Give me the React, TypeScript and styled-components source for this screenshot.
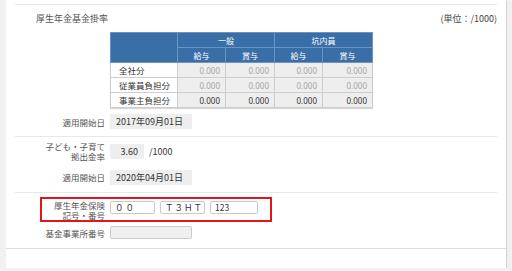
import React from 'react'
import styled, { createGlobalStyle } from 'styled-components'

const GlobalStyle = createGlobalStyle`
  html, body {
    margin: 0;
    padding: 0;
    background: #f1f1f1;
  }
  body {
    font-family: "Noto Sans CJK JP", "Noto Sans", sans-serif;
    color: #555;
  }
`

const Panel = styled.div`
  margin: 0 6px;
  width: 500px;
  height: 268px;
  background: #fff;
  box-shadow: 1px 1px 1px #d6d6d6;
  display: flex;
  flex-direction: column;
`

const Content = styled.div`
  padding: 0 9px;
  flex: 1;
`

const Divider = styled.div<{ $top?: number; $bottom?: number }>`
  height: 1px;
  background: #e8e8e8;
  margin-top: ${p => p.$top ?? 0}px;
  margin-bottom: ${p => p.$bottom ?? 0}px;
`

const TitleRow = styled.div`
  height: 26px;
  display: flex;
  align-items: center;
  justify-content: space-between;
  padding-left: 21px;
  font-size: 9px;
  color: #555;
  margin-bottom: 1px;
`

const Unit = styled.span`
  font-size: 9px;
  color: #444;
`

const RateTable = styled.table`
  margin-left: 95px;
  border-collapse: collapse;
  table-layout: fixed;
  width: 262px;
  font-size: 8px;
  border: 1px solid #c6c6c6;
  box-shadow: 0 1px 1px #d8d8d8;
`

const HeadCell = styled.th`
  background: #3a6ea7;
  color: #fff;
  font-weight: normal;
  height: 14px;
  padding: 0;
  border: 1px solid #6a94c2;
  text-align: center;
`

const LabelCell = styled.td`
  background: #fff;
  color: #333;
  height: 14px;
  padding: 0 0 0 8px;
  border: 1px solid #cdcdcd;
  font-size: 8.5px;
  white-space: nowrap;
`

const ValueCell = styled.td<{ $strong?: boolean }>`
  background: #eeeeee;
  color: ${p => (p.$strong ? '#333' : '#a5a5a5')};
  height: 14px;
  padding: 0 5px 0 0;
  border: 1px solid #cdcdcd;
  text-align: right;
  font-family: "Noto Sans", sans-serif;
`

const FieldRow = styled.div<{ $top: number; $height: number }>`
  display: flex;
  align-items: center;
  gap: 5px;
  margin-top: ${p => p.$top}px;
  height: ${p => p.$height}px;
`

const Label = styled.div<{ $width?: number }>`
  width: ${p => p.$width ?? 90}px;
  text-align: right;
  font-size: 8.5px;
  line-height: 10px;
  color: #555;
  flex-shrink: 0;
`

const ReadBox = styled.div<{ $width: number; $align?: string }>`
  width: ${p => p.$width}px;
  height: 15px;
  box-sizing: border-box;
  background: #eeeeee;
  color: #333;
  font-size: 9px;
  line-height: 15px;
  padding: 0 6px;
  text-align: ${p => p.$align ?? 'left'};
`

const Suffix = styled.span`
  font-size: 9px;
  color: #333;
`

const Highlight = styled.div`
  margin-top: 4px;
  margin-left: 25px;
  width: 232px;
  height: 25px;
  box-sizing: border-box;
  border: 2px solid #e3141c;
  display: flex;
  align-items: flex-start;
  gap: 5px;
`

const HighlightLabel = styled(Label)`
  width: 63px;
  margin-top: 1px;
`

const TextInput = styled.div<{ $width: number; $center?: boolean }>`
  margin-top: 2px;
  width: ${p => p.$width}px;
  height: 13px;
  box-sizing: border-box;
  border: 1px solid #c9c9c9;
  border-radius: 2px;
  background: #fff;
  color: #333;
  font-size: 8.5px;
  line-height: 11px;
  padding: 0 4px;
  letter-spacing: ${p => (p.$center ? '1px' : '0')};
  text-align: ${p => (p.$center ? 'center' : 'left')};
  white-space: nowrap;
`

const DisabledInput = styled.div`
  width: 82px;
  height: 13px;
  box-sizing: border-box;
  border: 1px solid #cccccc;
  border-radius: 2px;
  background: #efefef;
`

const Footer = styled.div`
  border-top: 1px solid #dedede;
  height: 19px;
`

const rows = [
  { name: '全社分', values: ['0.000', '0.000', '0.000', '0.000'], strong: false },
  { name: '従業員負担分', values: ['0.000', '0.000', '0.000', '0.000'], strong: false },
  { name: '事業主負担分', values: ['0.000', '0.000', '0.000', '0.000'], strong: true },
]

export default function App() {
  return (
    <>
      <GlobalStyle />
      <Panel>
        <Content>
          <Divider $top={4} />
          <TitleRow>
            <span>厚生年金基金掛率</span>
            <Unit>(単位：/1000)</Unit>
          </TitleRow>
          <RateTable>
            <colgroup>
              <col style={{ width: 67 }} />
              <col style={{ width: 48 }} />
              <col style={{ width: 49 }} />
              <col style={{ width: 48 }} />
              <col style={{ width: 50 }} />
            </colgroup>
            <thead>
              <tr>
                <HeadCell rowSpan={2} />
                <HeadCell colSpan={2}>一般</HeadCell>
                <HeadCell colSpan={2}>坑内員</HeadCell>
              </tr>
              <tr>
                <HeadCell>給与</HeadCell>
                <HeadCell>賞与</HeadCell>
                <HeadCell>給与</HeadCell>
                <HeadCell>賞与</HeadCell>
              </tr>
            </thead>
            <tbody>
              {rows.map(r => (
                <tr key={r.name}>
                  <LabelCell>{r.name}</LabelCell>
                  {r.values.map((v, i) => (
                    <ValueCell key={i} $strong={r.strong}>{v}</ValueCell>
                  ))}
                </tr>
              ))}
            </tbody>
          </RateTable>
          <FieldRow $top={6} $height={15}>
            <Label>適用開始日</Label>
            <ReadBox $width={82}>2017年09月01日</ReadBox>
          </FieldRow>
          <Divider $top={7} />

          <FieldRow $top={4} $height={20}>
            <Label>子ども・子育て<br />拠出金率</Label>
            <ReadBox $width={34} $align="right">3.60</ReadBox>
            <Suffix>/1000</Suffix>
          </FieldRow>
          <FieldRow $top={9} $height={14}>
            <Label>適用開始日</Label>
            <ReadBox $width={82}>2020年04月01日</ReadBox>
          </FieldRow>
          <Divider $top={8} />

          <Highlight>
            <HighlightLabel>厚生年金保険<br />記号・番号</HighlightLabel>
            <TextInput $width={45}>０ ０</TextInput>
            <TextInput $width={45} $center>Ｔ３ＨＴ</TextInput>
            <TextInput $width={48}>123</TextInput>
          </Highlight>
          <FieldRow $top={4} $height={13}>
            <Label>基金事業所番号</Label>
            <DisabledInput />
          </FieldRow>
        </Content>
        <Footer />
      </Panel>
    </>
  )
}
